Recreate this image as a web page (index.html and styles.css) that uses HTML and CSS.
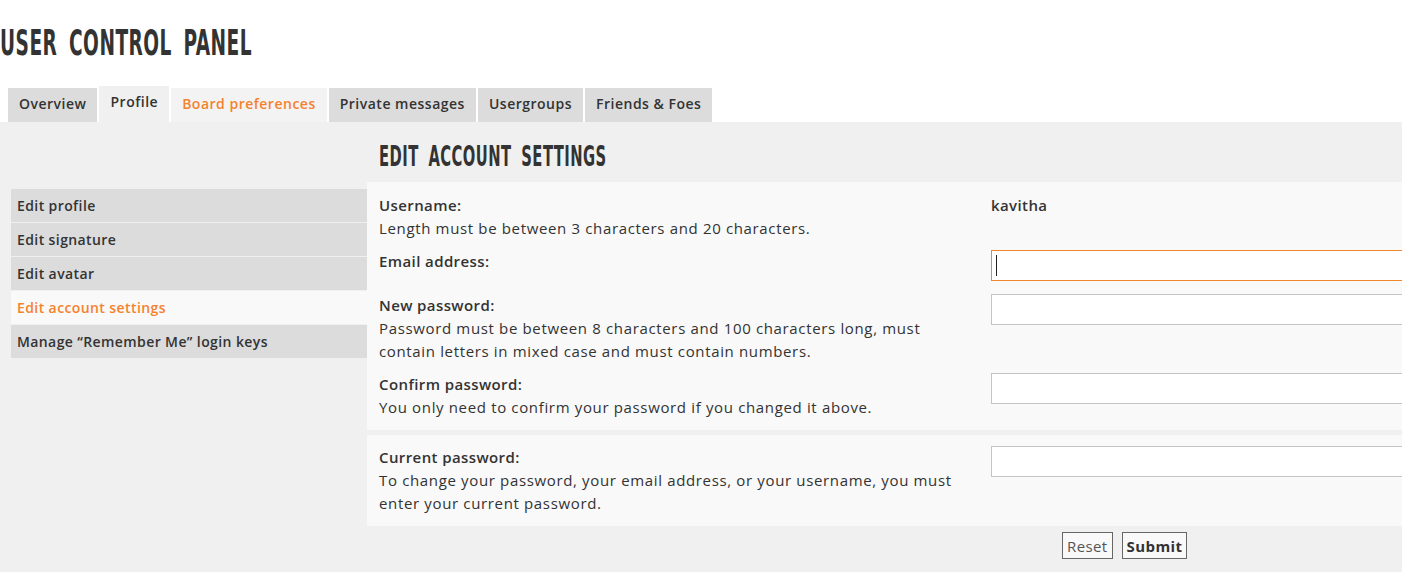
FILE: index.html
```html
<!DOCTYPE html>
<html lang="en">
<head>
<meta charset="utf-8">
<title>User Control Panel</title>
<link rel="stylesheet" href="styles.css">
</head>
<body>
<h1 class="page-title"><span class="cond">User Control Panel</span></h1>
<nav class="tabs">
  <a class="tab">Overview</a>
  <a class="tab active">Profile</a>
  <a class="tab hover">Board preferences</a>
  <a class="tab">Private messages</a>
  <a class="tab">Usergroups</a>
  <a class="tab">Friends &amp; Foes</a>
</nav>
<div class="panel">
  <aside class="side">
    <ul class="side-menu">
      <li class="side-item">Edit profile</li>
      <li class="side-item">Edit signature</li>
      <li class="side-item">Edit avatar</li>
      <li class="side-item current">Edit account settings</li>
      <li class="side-item">Manage “Remember Me” login keys</li>
    </ul>
  </aside>
  <main class="content">
    <h2 class="section-title"><span class="cond">Edit account settings</span></h2>
    <div class="box">
      <dl class="row">
        <dt class="label"><strong>Username:</strong><br><span class="explain">Length must be between 3 characters and 20 characters.</span></dt>
        <dd class="value"><strong class="name">kavitha</strong></dd>
      </dl>
      <dl class="row row-email">
        <dt class="label"><strong>Email address:</strong></dt>
        <dd class="value"><span class="field caret"><input class="inputbox focused" type="email"></span></dd>
      </dl>
      <dl class="row">
        <dt class="label"><strong>New password:</strong><br><span class="explain">Password must be between 8 characters and 100 characters long, must<br>contain letters in mixed case and must contain numbers.</span></dt>
        <dd class="value"><span class="field"><input class="inputbox" type="password"></span></dd>
      </dl>
      <dl class="row">
        <dt class="label"><strong>Confirm password:</strong><br><span class="explain">You only need to confirm your password if you changed it above.</span></dt>
        <dd class="value"><span class="field"><input class="inputbox" type="password"></span></dd>
      </dl>
    </div>
    <div class="box box-second">
      <dl class="row">
        <dt class="label"><strong>Current password:</strong><br><span class="explain">To change your password, your email address, or your username, you must<br>enter your current password.</span></dt>
        <dd class="value"><span class="field"><input class="inputbox" type="password"></span></dd>
      </dl>
    </div>
    <div class="actions">
      <button class="btn reset" type="reset">Reset</button>
      <button class="btn submit" type="submit">Submit</button>
    </div>
  </main>
</div>
</body>
</html>
```
FILE: styles.css
```css
html, body {
  margin: 0;
  padding: 0;
  background: #ffffff;
  overflow: hidden;
}
body {
  font-family: "Open Sans", "DejaVu Sans", sans-serif;
  font-size: 15px;
  letter-spacing: 0.4px;
  color: #333333;
  width: 1402px;
}
.cond {
  display: inline-block;
  font-family: "Liberation Sans Narrow", "DejaVu Sans Condensed", "Liberation Sans", sans-serif;
  font-weight: 700;
  text-transform: uppercase;
  transform-origin: left center;
  white-space: nowrap;
}
.page-title {
  margin: 0;
  padding: 22px 0 0 0;
  height: 88px;
  box-sizing: border-box;
  line-height: 40px;
  font-size: 35px;
  font-weight: 700;
  color: #333333;
}
.page-title .cond {
  transform: scaleX(0.59);
  letter-spacing: 0.8px;
  word-spacing: 8px;
}
.tabs {
  display: flex;
  gap: 2px;
  padding-left: 8px;
  height: 34px;
  align-items: flex-end;
}
.tab {
  display: block;
  height: 34px;
  line-height: 32px;
  padding: 0 11px;
  background: #dcdcdc;
  font-weight: 600;
  font-size: 14px;
  letter-spacing: 0.5px;
  color: #333333;
  box-sizing: border-box;
}
.tab.active {
  background: #f0f0f0;
  height: 36px;
  line-height: 32px;
}
.tab.hover {
  background: #f3f3f3;
  color: #f5822d;
}
.panel {
  display: flex;
  background: #f0f0f0;
  padding: 0 0 13px 11px;
  align-items: flex-start;
  width: 1402px;
  box-sizing: border-box;
}
.side {
  width: 356px;
  flex: none;
  padding-top: 67px;
}
.side-menu {
  list-style: none;
  margin: 0;
  padding: 0;
}
.side-item {
  height: 33px;
  line-height: 33px;
  margin-bottom: 1px;
  padding-left: 6px;
  background: #dcdcdc;
  font-weight: 600;
  font-size: 14px;
  color: #333333;
}
.side-item.current {
  background: #f9f9f9;
  color: #f5822d;
}
.content {
  flex: 1;
  min-width: 0;
  overflow: hidden;
}
.section-title {
  margin: 0;
  height: 60px;
  padding: 19px 0 0 12px;
  box-sizing: border-box;
  line-height: 28px;
  font-size: 28px;
  font-weight: 700;
  color: #333333;
}
.section-title .cond {
  transform: scaleX(0.585);
  letter-spacing: 0.8px;
  word-spacing: 7px;
}
.box {
  background: #f9f9f9;
  padding: 12px 0 11px 12px;
  margin-bottom: 5px;
}
.box-second {
  padding-top: 11px;
}
.row {
  display: flex;
  margin: 0 0 10px 0;
  line-height: 23px;
}
.row-email {
  margin-bottom: 13px;
}
.row:last-child {
  margin-bottom: 0;
}
.label {
  width: 612px;
  flex: none;
}
.label strong {
  font-weight: 600;
}
.explain {
  letter-spacing: 0.65px;
}
.value {
  margin: 0;
  flex: 1;
  min-width: 0;
}
.name {
  font-weight: 600;
}
.field {
  display: block;
  position: relative;
  width: 480px;
}
.caret::after {
  content: "";
  position: absolute;
  left: 5px;
  top: 5px;
  width: 1px;
  height: 21px;
  background: #222222;
}
.inputbox {
  display: block;
  width: 480px;
  height: 31px;
  box-sizing: border-box;
  border: 1px solid #c4c4c4;
  background: #ffffff;
  margin: 0;
  padding: 2px 4px;
  font: inherit;
  outline: none;
}
.inputbox.focused {
  border-color: #f0872c;
}
.actions {
  display: flex;
  gap: 9px;
  padding: 1px 0 0 695px;
}
.btn {
  height: 27px;
  padding: 0 4px;
  border: 1px solid #666666;
  background: #f9f9f9;
  font-family: inherit;
  font-size: 15px;
  letter-spacing: 0.4px;
  color: #333333;
  border-radius: 0;
}
.btn.reset {
  font-weight: 400;
  color: #555555;
}
.btn.submit {
  font-weight: 700;
}
```
